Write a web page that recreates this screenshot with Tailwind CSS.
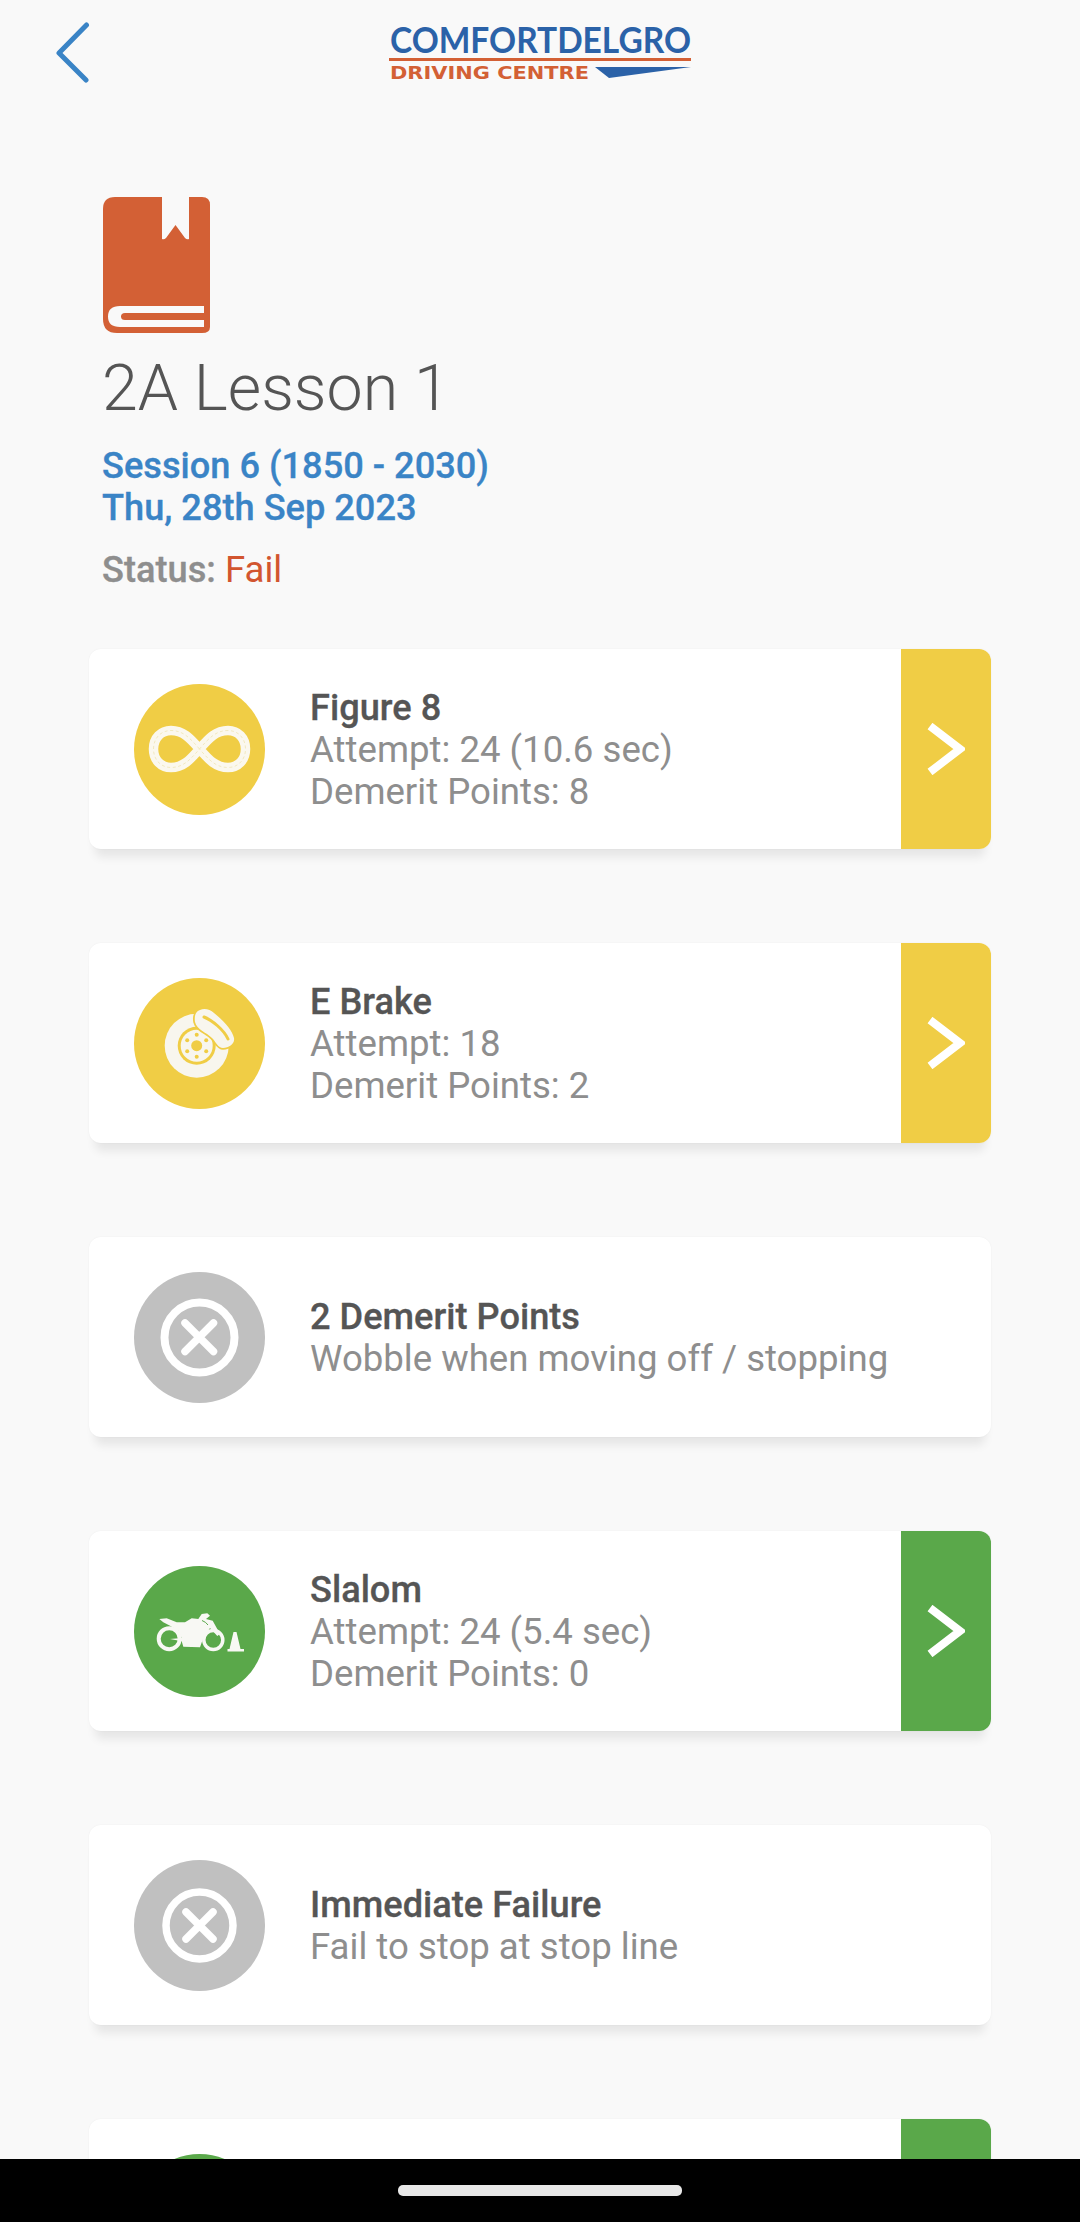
<!DOCTYPE html>
<html lang="en">
<head>
<meta charset="utf-8">
<script src="https://cdn.jsdelivr.net/npm/@tailwindcss/browser@4"></script>
</head>
<body class="m-0">
<div class="flex h-[2222px] w-[1080px] flex-col overflow-hidden bg-[#f9f9f9] font-['Roboto',sans-serif]">
  <main class="h-[2159px] shrink-0 overflow-hidden">
    <header class="flex h-[197px] items-start">
      <svg class="ml-[55px] mt-[22px] shrink-0" width="36" height="62" viewBox="0 0 36 62" fill="none" stroke="#3a84c6" stroke-width="5" stroke-linecap="round" stroke-linejoin="round"><path d="M31.5 4 L4 32 L31 59" transform="translate(0 -1)"/></svg>
      <svg class="ml-[276px] shrink-0" width="400" height="90" viewBox="0 0 400 90">
        <text x="23" y="53" font-family="'Lato',sans-serif" font-weight="700" font-size="36" fill="#2b62a8" textLength="301" lengthAdjust="spacingAndGlyphs">COMFORTDELGRO</text>
        <rect x="22" y="58" width="302" height="3" fill="#d36035"/>
        <text x="23" y="79" font-family="'DejaVu Sans',sans-serif" font-weight="700" font-size="17" fill="#d36035" textLength="199" lengthAdjust="spacingAndGlyphs">DRIVING CENTRE</text>
        <path d="M228 67 L324 67 L242 78 Z" fill="#2b62a8"/>
      </svg>
    </header>

    <section class="px-[102px]">
      <svg class="ml-[1px] block" width="108" height="137" viewBox="0 0 108 137">
        <path fill="#d36035" d="M12 0H99Q107 0 107 8V130Q107 136 99 136H14Q0 136 0 122V12Q0 0 12 0Z"/>
        <path fill="#f9f9f9" d="M59 0H86V42Q84 43 82 41L72.5 28 63 41Q61 43 59 42Z"/>
        <path fill="#f9f9f9" fill-rule="evenodd" d="M101 109H17Q5 109 5 119.5 5 130 17 130H101V123H22Q18 123 18 119.5 18 116 22 116H101Z"/>
      </svg>
      <h1 class="mt-[19px] text-[64.5px] leading-[70px] font-light text-[#555555]">2A Lesson 1</h1>
      <p class="mt-[22px] text-[36.2px] leading-[42px] font-medium text-[#3a84c6] [-webkit-text-stroke:0.3px_currentColor]">Session 6 (1850 - 2030)<br>Thu, 28th Sep 2023</p>
      <p class="mt-[20px] text-[36.6px] leading-[42px] text-[#8e8e8e]"><span class="text-[36.2px] font-medium [-webkit-text-stroke:0.3px_currentColor]">Status:</span> <span class="text-[#d2552f]">Fail</span></p>
    </section>

    <div class="ml-[89px] mt-[58px] flex w-[902px] flex-col gap-[94px]">

      <article class="flex h-[200px] items-center rounded-[12px] bg-white shadow-[0_14px_10px_-6px_rgba(0,0,0,0.08),0_0_2px_rgba(0,0,0,0.05)]">
        <svg class="ml-[45px] shrink-0" width="131" height="131" viewBox="0 0 131 131">
          <circle cx="65.5" cy="65.5" r="65.5" fill="#f0cd45"/>
          <path d="M65.5 65C56 54 49 46.5 37 46.5C27 46.5 19.5 54 19.5 65C19.5 76 27 83.5 37 83.5C49 83.5 56 76 65.5 65C75 54 82 46.5 94 46.5C104 46.5 111.5 54 111.5 65C111.5 76 104 83.5 94 83.5C82 83.5 75 76 65.5 65Z" fill="none" stroke="#fbf8ee" stroke-width="9.5"/>
          <path d="M65.5 65C56 54 49 46.5 37 46.5C27 46.5 19.5 54 19.5 65C19.5 76 27 83.5 37 83.5C49 83.5 56 76 65.5 65C75 54 82 46.5 94 46.5C104 46.5 111.5 54 111.5 65C111.5 76 104 83.5 94 83.5C82 83.5 75 76 65.5 65Z" fill="none" stroke="#efe4b4" stroke-width="0.8" stroke-dasharray="3 2.5"/>
        </svg>
        <div class="ml-[45px] min-w-0 flex-1 pt-[2px] text-[36.6px] leading-[42px] text-[#8e8e8e]">
          <h2 class="text-[36.2px] font-medium text-[#555555] [-webkit-text-stroke:0.3px_currentColor]">Figure 8</h2>
          <p>Attempt: 24 (10.6 sec)</p>
          <p>Demerit Points: 8</p>
        </div>
        <div class="flex h-full w-[90px] shrink-0 items-center justify-center rounded-r-[12px] bg-[#f0cd45]">
          <svg width="38" height="52" viewBox="0 0 38 52" fill="none" stroke="#fff" stroke-width="8"><path d="M3 3 L33 26 L3 49"/></svg>
        </div>
      </article>

      <article class="flex h-[200px] items-center rounded-[12px] bg-white shadow-[0_14px_10px_-6px_rgba(0,0,0,0.08),0_0_2px_rgba(0,0,0,0.05)]">
        <svg class="ml-[45px] shrink-0" width="131" height="131" viewBox="0 0 131 131">
          <circle cx="65.5" cy="65.5" r="65.5" fill="#f0cd45"/>
          <circle cx="62.7" cy="67.7" r="32" fill="#f8f6ee"/>
          <circle cx="62.7" cy="67.7" r="19" fill="#f0cd45"/>
          <circle cx="62.7" cy="67.7" r="16" fill="#f8f6ee"/>
          <circle cx="62.7" cy="67.7" r="5.5" fill="#f0cd45"/>
          <g fill="#f0cd45">
            <circle cx="62.7" cy="56.7" r="2"/><circle cx="72.2" cy="62.2" r="2"/><circle cx="72.2" cy="73.2" r="2"/><circle cx="62.7" cy="78.7" r="2"/><circle cx="53.2" cy="73.2" r="2"/><circle cx="53.2" cy="62.2" r="2"/>
          </g>
          <path d="M66 32C70 30 76 31 80 35C90 43 98 52 100 60C101 66 95 70 89 70C84 70 82 64 78 60C72 54 63 52 61 44C60 38 62 33 66 32Z" fill="#f8f6ee" stroke="#f0cd45" stroke-width="3.5" paint-order="stroke"/>
          <path d="M70 39C78 42 90 52 94 61" fill="none" stroke="#f0cd45" stroke-width="3" stroke-linecap="round"/>
        </svg>
        <div class="ml-[45px] min-w-0 flex-1 pt-[2px] text-[36.6px] leading-[42px] text-[#8e8e8e]">
          <h2 class="text-[36.2px] font-medium text-[#555555] [-webkit-text-stroke:0.3px_currentColor]">E Brake</h2>
          <p>Attempt: 18</p>
          <p>Demerit Points: 2</p>
        </div>
        <div class="flex h-full w-[90px] shrink-0 items-center justify-center rounded-r-[12px] bg-[#f0cd45]">
          <svg width="38" height="52" viewBox="0 0 38 52" fill="none" stroke="#fff" stroke-width="8"><path d="M3 3 L33 26 L3 49"/></svg>
        </div>
      </article>

      <article class="flex h-[200px] items-center rounded-[12px] bg-white shadow-[0_14px_10px_-6px_rgba(0,0,0,0.08),0_0_2px_rgba(0,0,0,0.05)]">
        <svg class="ml-[45px] shrink-0" width="131" height="131" viewBox="0 0 131 131">
          <circle cx="65.5" cy="65.5" r="65.5" fill="#c0c0c0"/>
          <circle cx="65.5" cy="65.5" r="35" fill="none" stroke="#fff" stroke-width="8"/>
          <path d="M51 51L79.5 79.5M79.5 51L51 79.5" stroke="#fff" stroke-width="7.5" stroke-linecap="round"/>
        </svg>
        <div class="ml-[45px] min-w-0 flex-1 pt-[2px] text-[36.6px] leading-[42px] text-[#8e8e8e]">
          <h2 class="text-[36.2px] font-medium text-[#555555] [-webkit-text-stroke:0.3px_currentColor]">2 Demerit Points</h2>
          <p>Wobble when moving off / stopping</p>
        </div>
      </article>

      <article class="flex h-[200px] items-center rounded-[12px] bg-white shadow-[0_14px_10px_-6px_rgba(0,0,0,0.08),0_0_2px_rgba(0,0,0,0.05)]">
        <svg class="ml-[45px] shrink-0" width="131" height="131" viewBox="0 0 131 131">
          <circle cx="65.5" cy="65.5" r="65.5" fill="#5aa84a"/>
          <g fill="none" stroke="#f8f8f4">
            <circle cx="35.2" cy="72.7" r="10.5" stroke-width="4"/>
            <circle cx="79.3" cy="74" r="9.5" stroke-width="3.5"/>
          </g>
          <path fill="#f8f8f4" d="M25.3 53L32.7 52.3L42.7 56.3L51 56.3L57.7 52.3L64.3 53L67.7 48L73.3 47.3L76 49.7L72 53L78.7 54.7L86 68L83.3 70L76 62L69.3 72L66 81.3L49.3 80.7L47.7 75.3L36 73L47.7 72L44.3 64.7L36 59.7L29.3 56.3Z"/>
          <path d="M68 54.5Q72 56 74 59" fill="none" stroke="#5aa84a" stroke-width="1"/>
          <path fill="#f8f8f4" d="M99.5 66H102.5L106.5 83H110V85.5H93.5V83H95.5Z"/>
        </svg>
        <div class="ml-[45px] min-w-0 flex-1 pt-[2px] text-[36.6px] leading-[42px] text-[#8e8e8e]">
          <h2 class="text-[36.2px] font-medium text-[#555555] [-webkit-text-stroke:0.3px_currentColor]">Slalom</h2>
          <p>Attempt: 24 (5.4 sec)</p>
          <p>Demerit Points: 0</p>
        </div>
        <div class="flex h-full w-[90px] shrink-0 items-center justify-center rounded-r-[12px] bg-[#5aa84a]">
          <svg width="38" height="52" viewBox="0 0 38 52" fill="none" stroke="#fff" stroke-width="8"><path d="M3 3 L33 26 L3 49"/></svg>
        </div>
      </article>

      <article class="flex h-[200px] items-center rounded-[12px] bg-white shadow-[0_14px_10px_-6px_rgba(0,0,0,0.08),0_0_2px_rgba(0,0,0,0.05)]">
        <svg class="ml-[45px] shrink-0" width="131" height="131" viewBox="0 0 131 131">
          <circle cx="65.5" cy="65.5" r="65.5" fill="#c0c0c0"/>
          <circle cx="65.5" cy="65.5" r="33.5" fill="none" stroke="#fff" stroke-width="7.5"/>
          <path d="M52 52L79 79M79 52L52 79" stroke="#fff" stroke-width="7.5" stroke-linecap="round"/>
        </svg>
        <div class="ml-[45px] min-w-0 flex-1 pt-[2px] text-[36.6px] leading-[42px] text-[#8e8e8e]">
          <h2 class="text-[36.2px] font-medium text-[#555555] [-webkit-text-stroke:0.3px_currentColor]">Immediate Failure</h2>
          <p>Fail to stop at stop line</p>
        </div>
      </article>

      <article class="flex h-[200px] items-center rounded-[12px] bg-white shadow-[0_14px_10px_-6px_rgba(0,0,0,0.08),0_0_2px_rgba(0,0,0,0.05)]">
        <svg class="ml-[45px] shrink-0" width="131" height="131" viewBox="0 0 131 131">
          <circle cx="65.5" cy="65.5" r="65.5" fill="#5aa84a"/>
        </svg>
        <div class="min-w-0 flex-1"></div>
        <div class="h-full w-[90px] shrink-0 rounded-r-[12px] bg-[#5aa84a]"></div>
      </article>
    </div>
  </main>
  <nav class="flex flex-1 justify-center bg-black pt-[26px]">
    <div class="h-[11px] w-[284px] rounded-[5px] bg-[#e8e8e8]"></div>
  </nav>
</div>
</body>
</html>
